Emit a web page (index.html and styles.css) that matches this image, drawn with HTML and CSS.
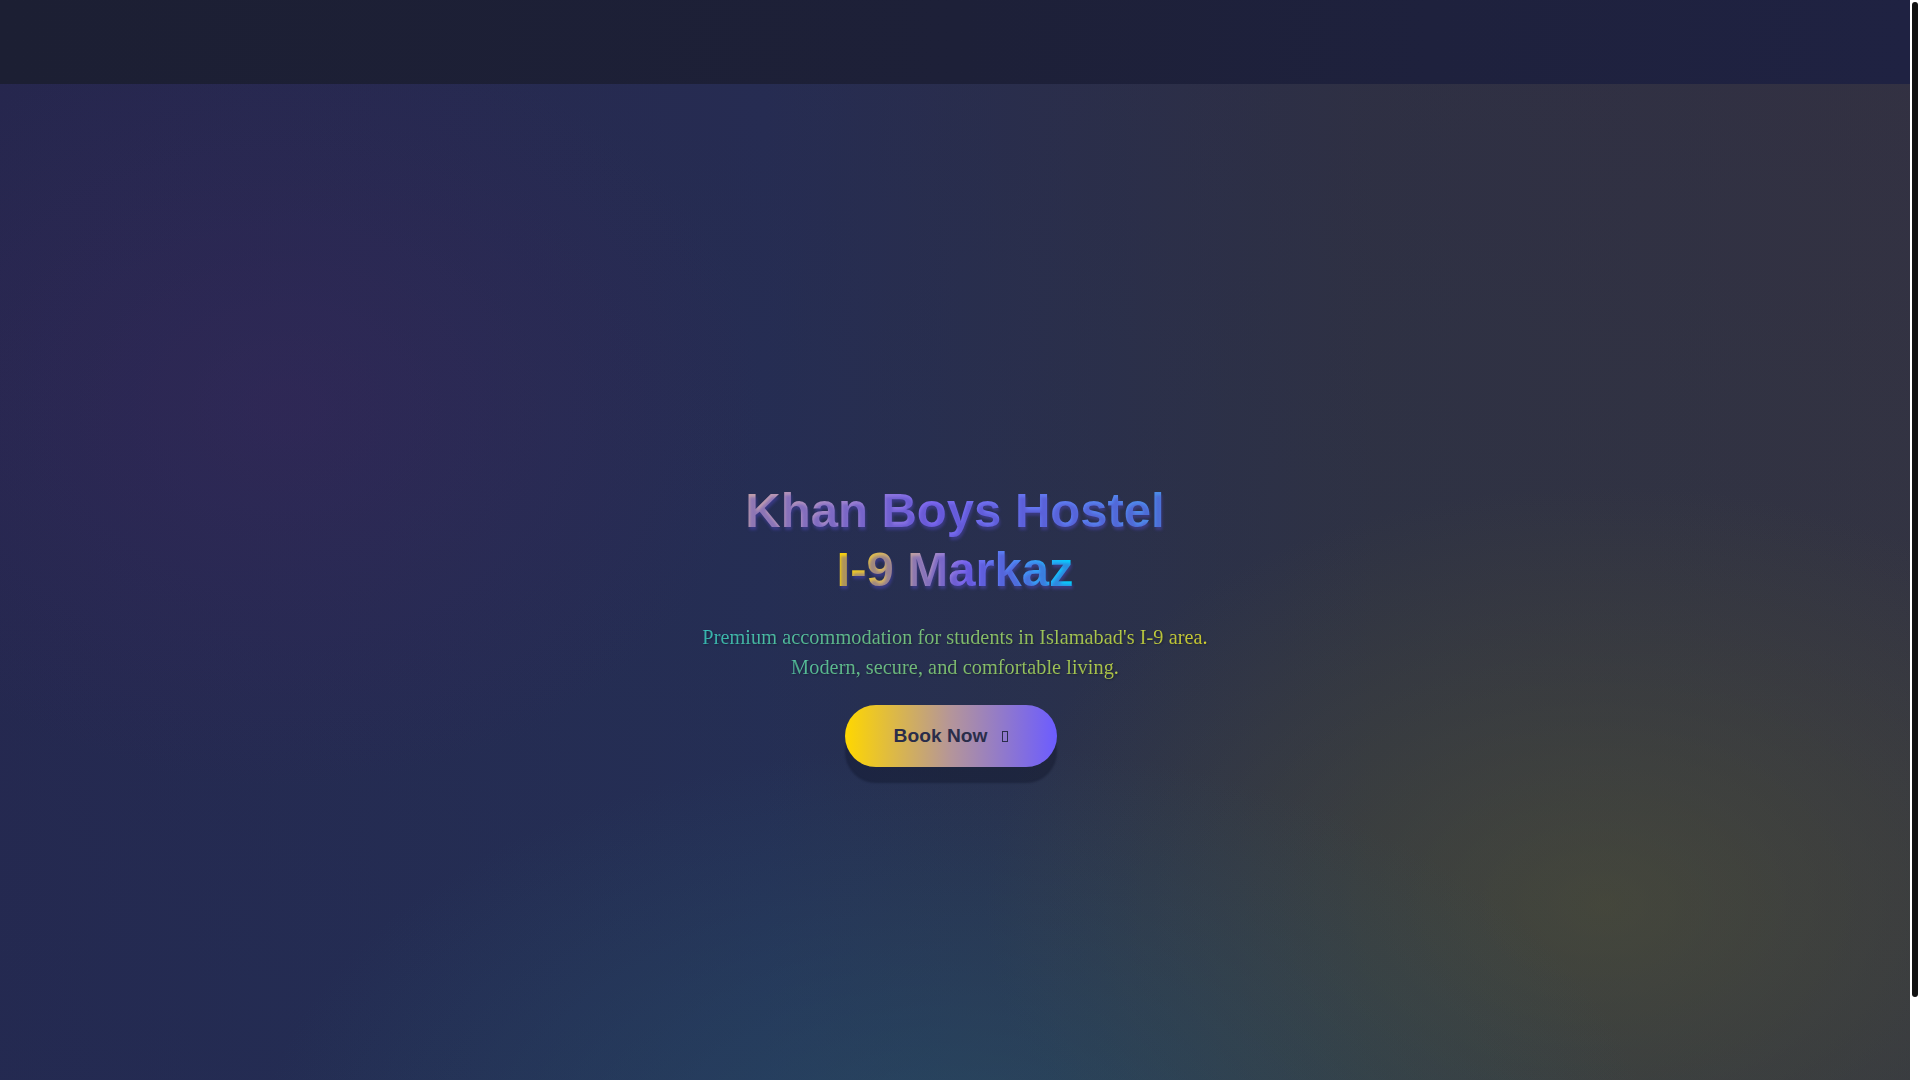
FILE: index.html
```html
<!DOCTYPE html>
<html lang="en">
<head>
	<meta charset="UTF-8">
	<title>Khan Boys Hostel I-9 Markaz</title>
	<link rel="stylesheet" href="styles.css">
</head>
<body>
	<div class="page">
		<header class="top-bar"></header>

		<section class="hero">
			<div class="hero-content">
				<h1 class="hero-title">
					<span class="title-line">Khan Boys Hostel</span>
					<span class="title-line title-accent">I-9 Markaz</span>
				</h1>
				<p class="hero-text">
					<span class="text-line">Premium accommodation for students in Islamabad's I-9 area.</span>
					<span class="text-line">Modern, secure, and comfortable living.</span>
				</p>
				<a href="#" class="btn-book">Book Now <span class="btn-icon"></span></a>
			</div>
		</section>
	</div>

	<div class="scroll-track"><div class="scroll-thumb"></div></div>
</body>
</html>
```

FILE: styles.css
```css
* {
	margin: 0;
	padding: 0;
	box-sizing: border-box;
}
body {
	font-family: "Liberation Serif", "Times New Roman", serif;
	background: #fff;
}

.page {
	margin-right: 10px;
	background: #262a45;
}

/* scrollbar as the browser drew it */
.scroll-track {
	position: fixed;
	top: 0;
	right: 0;
	width: 10px;
	height: 100vh;
	padding: 2px;
	background: #fff;
}
.scroll-thumb {
	height: 995px;
	background: #111;
	border-radius: 3px;
}

.top-bar {
	height: 84px;
	background: linear-gradient(90deg, #1c1f33 0%, #1d2038 50%, #1f2242 100%);
}

.hero {
	min-height: 100vh;
	display: flex;
	align-items: center;
	justify-content: center;
	text-align: center;
	background:
		radial-gradient(ellipse 480px 380px at 15% 30%, rgba(58, 38, 92, 0.45), transparent 100%),
		radial-gradient(ellipse 700px 420px at 50% 100%, rgba(42, 92, 112, 0.5), transparent 100%),
		radial-gradient(ellipse 620px 420px at 84% 76%, rgba(88, 88, 52, 0.5), transparent 100%),
		linear-gradient(180deg, rgba(40, 36, 76, 0.35), rgba(30, 50, 90, 0.2)),
		linear-gradient(90deg, #25284f 0%, #253055 40%, #32363f 72%, #38383d 100%);
}

.hero-content {
	display: flex;
	flex-direction: column;
	align-items: center;
}

.hero-title {
	font-family: "Liberation Sans", Arial, sans-serif;
	font-size: 49px;
	font-weight: bold;
	line-height: 59px;
	margin-bottom: 23px;
}
.title-line {
	display: block;
	width: fit-content;
	margin: 0 auto;
	background: linear-gradient(90deg, #c4a0a8 0%, #7c68f0 45%, #5a7ef0 80%, #4a8ee8 100%);
	-webkit-background-clip: text;
	background-clip: text;
	-webkit-text-fill-color: transparent;
	text-shadow: 1px 3px 3px rgba(80, 70, 190, 0.45);
}
.title-accent {
	background: linear-gradient(90deg, #ffd700 0%, #b89ab0 35%, #7a66f4 55%, #4a8cf4 78%, #00d4ff 100%);
	-webkit-background-clip: text;
	background-clip: text;
}

.hero-text {
	font-size: 20.4px;
	line-height: 30px;
	margin-bottom: 23px;
	background: linear-gradient(90deg, #3ecfc8 0%, #8ed47c 50%, #e6e434 100%);
	-webkit-background-clip: text;
	background-clip: text;
	-webkit-text-fill-color: transparent;
	text-shadow: 1px 1px 2px rgba(0, 0, 0, 0.28);
}
.text-line {
	display: block;
}

.btn-book {
	display: inline-flex;
	align-items: center;
	gap: 15px;
	height: 62px;
	padding: 0 49px;
	margin-right: 8px;
	border-radius: 31px;
	font-family: "Liberation Sans", Arial, sans-serif;
	font-size: 19.2px;
	font-weight: bold;
	color: #2a2d4a;
	text-decoration: none;
	background: linear-gradient(90deg, #ffd700 0%, #b4959a 50%, #6c5cff 100%);
	box-shadow: 0 16px 2px rgba(5, 10, 25, 0.3);
}
.btn-icon {
	display: inline-block;
	width: 6px;
	height: 11px;
	border: 1px solid #2a2d4a;
	margin-top: 1px;
}
```
